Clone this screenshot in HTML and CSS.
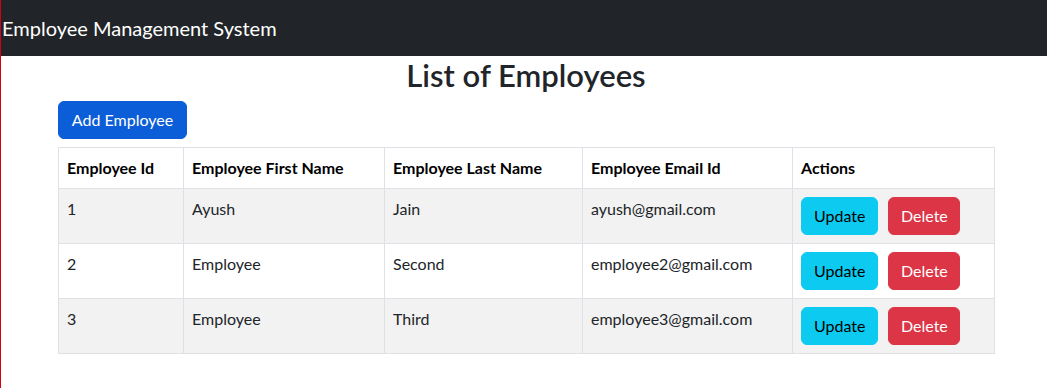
FILE: index.html
```html
<!DOCTYPE html>
<html>
<head>
<meta charset="utf-8">
<title>Employee Management System</title>
<link rel="stylesheet" href="styles.css">
</head>
<body>
<header class="navbar">
  <span class="brand">Employee Management System</span>
</header>
<main class="page">
  <div class="container">
    <h2 class="title">List of Employees</h2>
    <div class="toolbar">
      <button class="btn btn-primary">Add Employee</button>
    </div>
    <table class="table">
      <colgroup>
        <col class="c1"><col class="c2"><col class="c3"><col class="c4"><col class="c5">
      </colgroup>
      <thead>
        <tr>
          <th>Employee Id</th>
          <th>Employee First Name</th>
          <th>Employee Last Name</th>
          <th>Employee Email Id</th>
          <th>Actions</th>
        </tr>
      </thead>
      <tbody>
        <tr class="odd">
          <td>1</td><td>Ayush</td><td>Jain</td><td>ayush@gmail.com</td>
          <td><button class="btn btn-info">Update</button><button class="btn btn-danger">Delete</button></td>
        </tr>
        <tr>
          <td>2</td><td>Employee</td><td>Second</td><td>employee2@gmail.com</td>
          <td><button class="btn btn-info">Update</button><button class="btn btn-danger">Delete</button></td>
        </tr>
        <tr class="odd">
          <td>3</td><td>Employee</td><td>Third</td><td>employee3@gmail.com</td>
          <td><button class="btn btn-info">Update</button><button class="btn btn-danger">Delete</button></td>
        </tr>
      </tbody>
    </table>
  </div>
</main>
</body>
</html>
```
FILE: styles.css
```css
* { box-sizing: border-box; }
html, body { height: 100%; }
body {
  margin: 0;
  border-left: 1px solid #d9000d;
  font-family: Lato, "Liberation Sans", sans-serif;
  font-size: 16px;
  line-height: 1.5;
  color: #212529;
  background: #fff;
}
.navbar {
  height: 56px;
  background: #212529;
  display: flex;
  align-items: center;
  padding-left: 1px;
}
.brand {
  color: #fff;
  font-size: 20px;
  line-height: 30px;
  white-space: nowrap;
}
.page { padding-left: 4px; }
.container {
  max-width: 960px;
  margin: 0 auto;
  padding: 0 12px;
}
.title {
  margin: 0 0 7px;
  text-align: center;
  font-size: 31px;
  font-weight: 600;
  line-height: 38px;
  color: #212529;
}
.toolbar { margin-bottom: 8px; display: flex; }
.btn {
  font-family: inherit;
  font-size: 16px;
  line-height: 24px;
  padding: 6px 12px;
  border: 1px solid transparent;
  border-radius: 6px;
  cursor: pointer;
  display: inline-block;
  vertical-align: top;
}
.btn-primary { background: #0b5ed7; border-color: #0b5ed7; color: #fff; width: 129px; }
.btn-info { background: #0dcaf0; border-color: #0dcaf0; color: #000; width: 77px; }
.btn-danger { background: #dc3545; border-color: #dc3545; color: #fff; width: 72px; }
.table {
  width: 936px;
  border-collapse: collapse;
  table-layout: fixed;
  color: #212529;
}
.c1 { width: 125px; }
.c2 { width: 201px; }
.c3 { width: 198px; }
.c4 { width: 210px; }
.c5 { width: 202px; }
.table th, .table td {
  border: 1px solid #dee2e6;
  padding: 8px;
  text-align: left;
  vertical-align: top;
  white-space: nowrap;
}
.table th { font-weight: 700; color: #000; }
.table td { height: 55px; }
.table td .btn + .btn { margin-left: 10px; }
.odd td { background: #f2f2f2; }
```
